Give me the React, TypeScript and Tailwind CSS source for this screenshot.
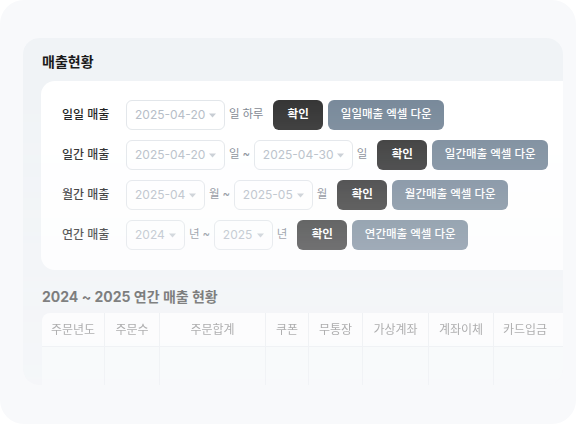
import type { ReactNode } from "react";

const font = "font-['Inter','Noto_Sans_CJK_KR',sans-serif]";

function Caret() {
  return (
    <svg width="7" height="5" viewBox="0 0 7 5" className="shrink-0">
      <path d="M0 0.5h7L3.5 4.5z" fill="#c5cbd2" />
    </svg>
  );
}

function DateSelect({ value, width }: { value: string; width: string }) {
  return (
    <div
      className={`flex h-[30px] ${width} shrink-0 items-center justify-between rounded-[6px] border border-[#e2e6ea] bg-white pl-[8px] pr-[8px] text-[12px] text-[#b3bbc5]`}
    >
      <span>{value}</span>
      <Caret />
    </div>
  );
}

function Suffix({ children }: { children: ReactNode }) {
  return (
    <span className="shrink-0 text-[11.5px] tracking-[-0.2px] text-[#7d8590]">
      {children}
    </span>
  );
}

function Row({
  label,
  excel,
  children,
}: {
  label: string;
  excel: string;
  children: ReactNode;
}) {
  return (
    <div className="flex h-[30px] items-center">
      <span className="w-[64px] shrink-0 text-[12px] font-medium text-[#1b1b1b]">
        {label}
      </span>
      <div className="flex items-center gap-[4px]">{children}</div>
      <button
        type="button"
        className="ml-[10px] h-[30px] w-[50px] shrink-0 rounded-[6px] bg-[#333333] text-[11.5px] font-bold text-white"
      >
        확인
      </button>
      <button
        type="button"
        className="ml-[5px] h-[30px] w-[116px] shrink-0 rounded-[6px] bg-[#778899] text-[11.5px] font-medium text-white"
      >
        {excel}
      </button>
    </div>
  );
}

const columns = [
  { name: "주문년도", w: "w-[63px]" },
  { name: "주문수", w: "w-[55px]" },
  { name: "주문합계", w: "w-[106px]" },
  { name: "쿠폰", w: "w-[43px]" },
  { name: "무통장", w: "w-[54px]" },
  { name: "가상계좌", w: "w-[66px]" },
  { name: "계좌이체", w: "w-[65px]" },
];

export default function App() {
  return (
    <div className={`h-[425px] w-[585px] bg-white ${font}`}>
      <div className="h-[424px] w-[576px] rounded-[24px] bg-[#f8f9fb] pl-[23px] pt-[38px]">
        <div className="h-[347px] w-[540px] overflow-hidden rounded-[16px] bg-[#f0f3f6] [mask-image:linear-gradient(to_bottom,#000_16%,transparent_160%)]">
          <h2 className="pl-[19px] pt-[14px] text-[14px] leading-[20px] font-bold text-[#1a1a1a]">
            매출현황
          </h2>

          <div className="ml-[18px] mt-[9px] w-[540px] space-y-[10px] rounded-[14px] bg-white pb-[20px] pl-[21px] pt-[19px]">
            <Row label="일일 매출" excel="일일매출 엑셀 다운">
              <DateSelect value="2025-04-20" width="w-[99px]" />
              <Suffix>일 하루</Suffix>
            </Row>
            <Row label="일간 매출" excel="일간매출 엑셀 다운">
              <DateSelect value="2025-04-20" width="w-[99px]" />
              <Suffix>일 ~</Suffix>
              <DateSelect value="2025-04-30" width="w-[99px]" />
              <Suffix>일</Suffix>
            </Row>
            <Row label="월간 매출" excel="월간매출 엑셀 다운">
              <DateSelect value="2025-04" width="w-[79px]" />
              <Suffix>월 ~</Suffix>
              <DateSelect value="2025-05" width="w-[79px]" />
              <Suffix>월</Suffix>
            </Row>
            <Row label="연간 매출" excel="연간매출 엑셀 다운">
              <DateSelect value="2024" width="w-[59px]" />
              <Suffix>년 ~</Suffix>
              <DateSelect value="2025" width="w-[59px]" />
              <Suffix>년</Suffix>
            </Row>
          </div>

          <h3 className="mt-[17px] pl-[19px] text-[14px] leading-[20px] font-bold text-[#2a2a2a]">
            2024 ~ 2025 연간 매출 현황
          </h3>

          <div className="ml-[19px] mt-[6px] w-[521px] overflow-hidden rounded-tl-[8px]">
            <div className="flex h-[34px] bg-white">
              {columns.map((c) => (
                <div
                  key={c.name}
                  className={`${c.w} flex shrink-0 items-center justify-center border-b border-r border-[#e8ebee] text-[12px] text-[#6b6b6b]`}
                >
                  {c.name}
                </div>
              ))}
              <div className="flex flex-1 items-center border-b border-[#e8ebee] pl-[9px] text-[12px] text-[#6b6b6b]">
                카드입금
              </div>
            </div>
            <div className="flex h-[40px] bg-[#f9fafb]">
              {columns.map((c) => (
                <div
                  key={c.name}
                  className={`${c.w} shrink-0 border-r border-[#e8ebee]`}
                />
              ))}
              <div className="flex-1" />
            </div>
          </div>
        </div>
      </div>
    </div>
  );
}
